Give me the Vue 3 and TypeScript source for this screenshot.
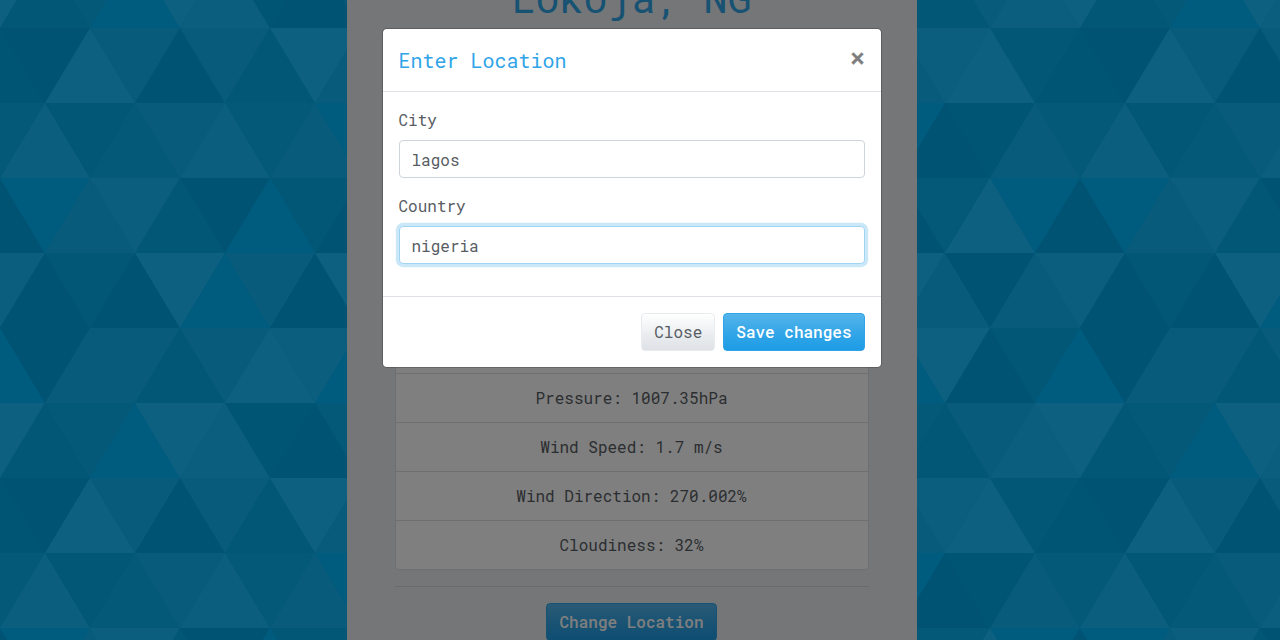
<script setup lang="ts">
import { ref } from 'vue'

type Tone = 'a' | 'b' | 'c' | 'd' | 'e' | 'f' | 'g' | 'B'

interface Cell {
  points: string
  tone: Tone
}

// One letter per triangle; each row is 24 half-steps wide and the six rows repeat.
const rows: string[] = [
  'bageaecge' + 'ddddddddddd' + 'efgc',
  'dfcdefdeB' + 'ddddddddddd' + 'Babe',
  'aBefcaBca' + 'ddddddddddd' + 'adgB',
  'facagBeag' + 'ddddddddddd' + 'geae',
  'BaeecegfB' + 'ddddddddddd' + 'Bgac',
  'gcdBgfbad' + 'ddddddddddd' + 'dcef',
]

const HALF = 45
const ROW_HEIGHT = 75
const TOP = 28

const cells: Cell[] = []
for (let r = -1; r <= 8; r++) {
  const row = rows[(r + 6) % 6]
  const y0 = TOP + r * ROW_HEIGHT
  const y1 = y0 + ROW_HEIGHT
  for (let i = 0; i <= 29; i++) {
    const x = i * HALF
    const up = (i + r + 6) % 2 === 0
    cells.push({
      tone: row[i % 24] as Tone,
      points: up
        ? `${x},${y0} ${x + HALF},${y1} ${x - HALF},${y1}`
        : `${x - HALF},${y0} ${x + HALF},${y0} ${x},${y1}`,
    })
  }
}

const readings: string[] = [
  'Pressure: 1007.35hPa',
  'Wind Speed: 1.7 m/s',
  'Wind Direction: 270.002%',
  'Cloudiness: 32%',
]

const city = ref('lagos')
const country = ref('nigeria')
</script>

<template>
  <div class="app">
    <svg class="pattern" width="1280" height="640" viewBox="0 0 1280 640" aria-hidden="true">
      <polygon v-for="(c, i) in cells" :key="i" :points="c.points" :class="'tone-' + c.tone" />
    </svg>

    <main class="page">
      <section class="card">
        <h1 class="place">Lokoja, NG</h1>
        <ul class="readings">
          <li class="spacer"></li>
          <li v-for="r in readings" :key="r">{{ r }}</li>
        </ul>
        <hr />
        <button class="btn primary" type="button">Change Location</button>
      </section>
    </main>

    <div class="backdrop">
      <form class="modal" @submit.prevent>
        <header class="modal-header">
          <h5>Enter Location</h5>
          <button class="close" type="button" aria-label="Close">×</button>
        </header>
        <div class="modal-body">
          <label for="city">City</label>
          <input id="city" v-model="city" type="text" />
          <label for="country">Country</label>
          <input id="country" v-model="country" class="focused" type="text" />
        </div>
        <footer class="modal-footer">
          <button class="btn secondary" type="button">Close</button>
          <button class="btn primary" type="submit">Save changes</button>
        </footer>
      </form>
    </div>
  </div>
</template>

<style>
html,
body {
  margin: 0;
  overflow: hidden;
}
</style>

<style scoped>
* {
  box-sizing: border-box;
}
.app {
  position: relative;
  width: 1280px;
  height: 640px;
  overflow: hidden;
  background: #08b2f0;
  font-family: 'Roboto Mono', 'DejaVu Sans Mono', monospace;
  font-size: 16px;
  line-height: 24px;
  color: #575c63;
}
.pattern {
  position: absolute;
  inset: 0;
}
.tone-a { fill: #00a6e6; }
.tone-b { fill: #00a8e8; }
.tone-c { fill: #04aeec; }
.tone-d { fill: #08b2f0; }
.tone-e { fill: #10b6f4; }
.tone-f { fill: #16bcfa; }
.tone-g { fill: #1ac0ff; }
.tone-B { fill: #00b8ff; }

.page {
  position: relative;
  display: flex;
  justify-content: center;
  width: 1263px;
  height: 640px;
}
.card {
  display: flex;
  flex-direction: column;
  align-items: center;
  width: 570px;
  height: 720px;
  margin-top: -32px;
  padding: 0 48px;
  background: #e9ecef;
}
.place {
  margin: 0;
  height: 60px;
  font-size: 40px;
  line-height: 60px;
  font-weight: 400;
  color: #2fa4e7;
}
.readings {
  width: 100%;
  margin: 296px 0 0;
  padding: 0;
  list-style: none;
  text-align: center;
  background: #fff;
  border: 1px solid #dfdfdf;
  border-radius: 4px;
}
.readings li {
  height: 49px;
  padding: 12px 20px;
  border-bottom: 1px solid #dfdfdf;
}
.readings li:last-child {
  height: 48px;
  border-bottom: 0;
}
.readings .spacer {
  padding: 0;
}
hr {
  width: 100%;
  margin: 16px 0;
  border: 0;
  border-top: 1px solid rgba(0, 0, 0, 0.1);
}

.btn {
  height: 38px;
  padding: 6px 12px;
  border: 1px solid;
  border-radius: 4px;
  font: inherit;
  white-space: nowrap;
}
.primary {
  font-weight: 500;
  color: #fff;
  background: linear-gradient(#54b4eb, #2fa4e7 60%, #1d9ce5);
  border-color: #2fa4e7;
}
.secondary {
  color: #575c63;
  background: linear-gradient(#fff, #e9ecef 60%, #dee2e6);
  border-color: #e9ecef;
}

.backdrop {
  position: absolute;
  inset: 0;
  display: flex;
  justify-content: center;
  align-items: flex-start;
  padding: 28px 17px 0 0;
  background: rgba(0, 0, 0, 0.5);
}
.modal {
  width: 500px;
  background: #fff;
  background-clip: padding-box;
  border: 1px solid rgba(0, 0, 0, 0.2);
  border-radius: 4.8px;
}
.modal-header {
  display: flex;
  justify-content: space-between;
  align-items: flex-start;
  padding: 16px;
  border-bottom: 1px solid #dee2e6;
}
.modal-header h5 {
  margin: 0;
  font-size: 20px;
  line-height: 30px;
  font-weight: 400;
  color: #2fa4e7;
}
.close {
  margin-right: -0.6px;
  padding: 0;
  border: 0;
  background: none;
  font: inherit;
  font-size: 26px;
  font-weight: 500;
  line-height: 24px;
  color: #000;
  -webkit-text-stroke: 0.4px #000;
  opacity: 0.5;
}
.modal-body {
  display: flex;
  flex-direction: column;
  padding: 16px;
}
.modal-body label {
  margin-bottom: 8px;
}
.modal-body input {
  height: 38px;
  margin: 0 0 16px;
  padding: 6px 12px;
  border: 1px solid #ced4da;
  border-radius: 4px;
  outline: 0;
  font: inherit;
  color: #575c63;
  background: #fff;
}
.modal-body input.focused {
  border-color: #a0d5f5;
  box-shadow: 0 0 0 3.2px rgba(47, 164, 231, 0.25);
}
.modal-footer {
  display: flex;
  justify-content: flex-end;
  gap: 8px;
  padding: 16px;
  border-top: 1px solid #dee2e6;
}
</style>
